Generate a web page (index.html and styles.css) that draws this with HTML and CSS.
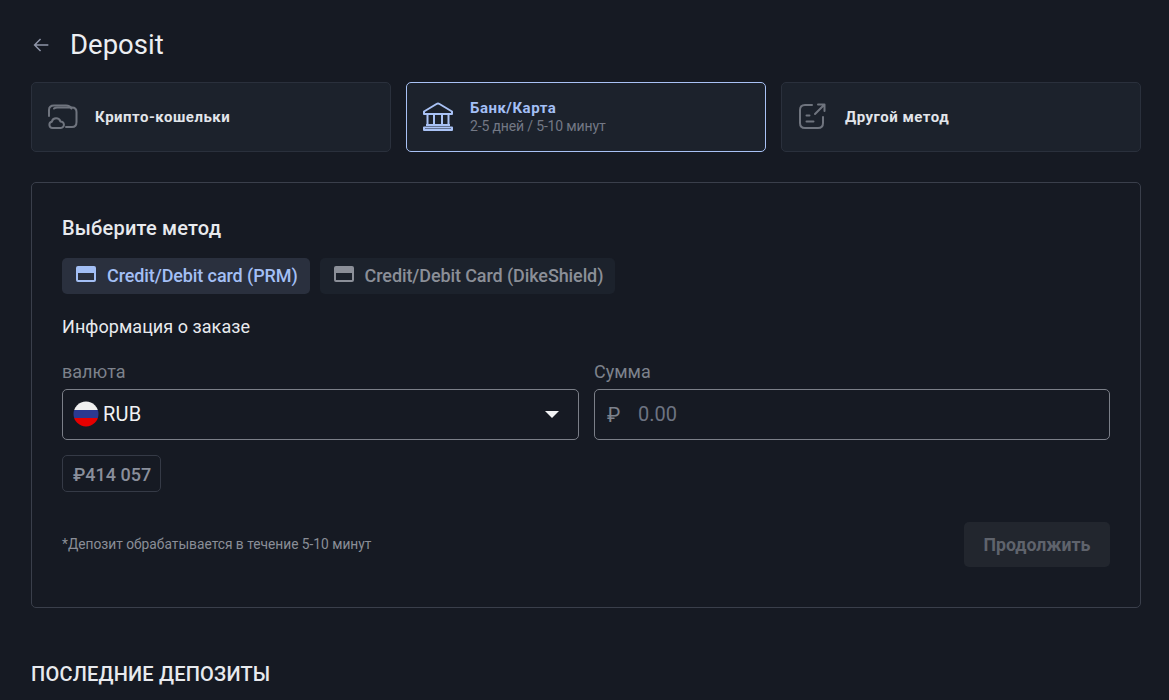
FILE: index.html
```html
<!DOCTYPE html>
<html lang="ru">
<head>
<meta charset="utf-8">
<title>Deposit</title>
<link rel="stylesheet" href="styles.css">
</head>
<body>
<main class="page">
  <header class="title-row">
    <svg class="back" viewBox="0 0 24 24" fill="none" stroke="currentColor" stroke-width="1.6"><path d="M20 12H5M11.500 5.500 5 12l6.500 6.500"/></svg>
    <h1>Deposit</h1>
  </header>
  <section class="tabs">
    <div class="tab">
      <svg class="tab-icon" viewBox="0 0 32 32" fill="none" stroke="currentColor" stroke-width="2" stroke-linecap="round" stroke-linejoin="round"><path d="M2 15V9C2 6 4 4.500 7 4.500h12c2.800 0 4.600 1 5.500 3"/><path d="M7 7.500c.8-.7 2-1 3.500-1H25c3 0 4.500 2 4.500 4.500v10c0 3-1.500 5-4.500 5h-6"/><path d="M5.500 27a3.200 3.200 0 0 1-.7-6.300 4.500 4.500 0 0 1 8.600-.3 3.300 3.300 0 0 1 .4 6.600z"/></svg>
      <div class="tab-text"><div class="tab-title">Крипто-кошельки</div></div>
    </div>
    <div class="tab active">
      <svg class="tab-icon" viewBox="0 0 32 32" fill="none" stroke="currentColor" stroke-width="2" stroke-linejoin="round"><path d="M14.500 3a3 3 0 0 1 3 0L30 10.500V13H2v-2.500z"/><path d="M5.500 13v11M12 13v11M20 13v11M26.500 13v11M4 24h24"/><path d="M2 29h28v-2.500H2z"/></svg>
      <div class="tab-text"><div class="tab-title">Банк/Карта</div><div class="tab-sub">2-5 дней / 5-10 минут</div></div>
    </div>
    <div class="tab">
      <svg class="tab-icon" viewBox="0 0 32 32" fill="none" stroke="currentColor" stroke-width="2" stroke-linecap="round" stroke-linejoin="round"><path d="M15 4H8C4.800 4 3 6 3 9v13c0 3 1.800 5 5 5h13c3 0 5-2 5-5v-6"/><path d="M18 13 27.500 3.500M21 3.500h6.500V10"/><path d="M9.500 14.500h3M9.500 20.500h7"/></svg>
      <div class="tab-text"><div class="tab-title">Другой метод</div></div>
    </div>
  </section>
  <section class="panel">
    <h2 class="panel-title">Выберите метод</h2>
    <div class="methods">
      <div class="method selected">
        <svg class="card-icon" viewBox="0 0 20 16"><path fill="currentColor" fill-rule="evenodd" d="M2 0h16a2 2 0 0 1 2 2v12a2 2 0 0 1-2 2H2a2 2 0 0 1-2-2V2a2 2 0 0 1 2-2zm0 7v7h16V7z"/></svg>
        <span class="method-label">Credit/Debit card (PRM)</span>
      </div>
      <div class="method">
        <svg class="card-icon" viewBox="0 0 20 16"><path fill="currentColor" fill-rule="evenodd" d="M2 0h16a2 2 0 0 1 2 2v12a2 2 0 0 1-2 2H2a2 2 0 0 1-2-2V2a2 2 0 0 1 2-2zm0 7v7h16V7z"/></svg>
        <span class="method-label">Credit/Debit Card (DikeShield)</span>
      </div>
    </div>
    <h3 class="section-title">Информация о заказе</h3>
    <div class="form-grid">
      <div class="field">
        <label class="field-label">валюта</label>
        <div class="control select">
          <svg class="flag" viewBox="0 0 26 26"><defs><clipPath id="flag-circle"><circle cx="13" cy="13" r="12.500"/></clipPath></defs><g clip-path="url(#flag-circle)"><rect width="26" height="9" fill="#f0f0f0"/><rect y="9" width="26" height="8" fill="#2b3990"/><rect y="17" width="26" height="9" fill="#e60000"/></g></svg>
          <span class="code">RUB</span>
          <span class="caret"></span>
        </div>
      </div>
      <div class="field">
        <label class="field-label">Сумма</label>
        <div class="control amount">
          <span class="symbol">₽</span>
          <span class="placeholder">0.00</span>
        </div>
      </div>
    </div>
    <div class="limit">₽414 057</div>
    <div class="footer-row">
      <p class="note">*Депозит обрабатывается в течение 5-10 минут</p>
      <button class="submit" type="button">Продолжить</button>
    </div>
  </section>
  <h2 class="recent">Последние депозиты</h2>
</main>
</body>
</html>
```
FILE: styles.css
```css
* { box-sizing: border-box; }
html, body { margin: 0; height: 100%; overflow: hidden; }
body { background: #161a23; font-family: Roboto, "Liberation Sans", sans-serif; color: #e8eaee; }
h1, h2, h3, p { margin: 0; }
.page { padding: 0 28px 0 31px; }
.title-row { height: 82px; padding-top: 27px; display: flex; align-items: flex-start; }
.back { width: 22px; height: 22px; margin: 7px 18px 0 -1px; color: #8f95a8; flex: none; }
h1 { font-size: 27.5px; font-weight: 400; line-height: 36px; color: #eceef2; }
.tabs { display: grid; grid-template-columns: repeat(3, 1fr); gap: 15px; }
.tab { height: 70px; display: flex; align-items: center; gap: 16px; padding: 0 15px; background: #1c222c; border: 1px solid #2a303c; border-radius: 5px; color: #6f747e; }
.tab-icon { width: 32px; height: 32px; flex: none; }
.tab-title { font-size: 15px; font-weight: 700; line-height: 18px; letter-spacing: .5px; color: #e2e5ea; }
.tab-sub { font-size: 14px; line-height: 18px; letter-spacing: -.15px; color: #737885; }
.tab.active { border-color: #a9c2f5; color: #a9c2f5; }
.tab.active .tab-title { color: #a3bff5; }
.panel { margin-top: 30px; height: 426px; padding: 33px 30px 0; border: 1px solid #3a3f4b; border-radius: 5px; }
.panel-title { font-size: 20px; font-weight: 500; line-height: 24px; letter-spacing: .2px; color: #e8eaee; }
.methods { display: flex; gap: 10px; margin-top: 18px; }
.method { height: 36px; display: flex; align-items: center; gap: 11px; padding: 0 12px 0 14px; border-radius: 5px; background: #1c222c; color: #8b8f98; font-size: 18px; font-weight: 500; letter-spacing: -.1px; }
.method-label { margin-top: -2px; }
.method .card-icon { color: #8b8f98; margin-top: -4px; }
.method.selected { background: #2a303e; color: #a3bff5; }
.method.selected .card-icon { color: #a3bff5; }
.card-icon { width: 20px; height: 16px; flex: none; }
.section-title { margin-top: 22px; font-size: 18px; font-weight: 400; line-height: 22px; letter-spacing: .05px; color: #e8eaee; }
.form-grid { display: grid; grid-template-columns: 517px 516px; gap: 15px; margin-top: 23px; }
.field-label { display: block; font-size: 18px; line-height: 22px; color: #7d828c; }
.control { height: 51px; margin-top: 6px; display: flex; align-items: center; border: 1px solid #7b7f88; border-radius: 5px; }
.select { padding: 0 19px 0 10px; }
.flag { width: 26px; height: 26px; flex: none; margin-top: -2px; }
.code { margin: -2px 0 0 4px; font-size: 20px; letter-spacing: .2px; color: #f1f2f4; flex: 1; }
.caret { width: 0; height: 0; border-left: 7px solid transparent; border-right: 7px solid transparent; border-top: 7px solid #f1f2f4; }
.amount { padding: 0 12px; font-size: 20px; }
.symbol { width: 31px; color: #7d828c; }
.placeholder { color: #6d7381; margin-top: -1px; }
.limit { display: inline-flex; align-items: center; height: 37px; margin-top: 15px; padding: 2px 9px 0 10px; border: 1px solid #353a46; border-radius: 5px; font-size: 18px; font-weight: 500; color: #8a8f9b; }
.footer-row { display: flex; justify-content: space-between; align-items: center; margin-top: 30px; }
.note { font-size: 13.75px; color: #8a8e97; margin-top: -1px; }
.submit { width: 146px; height: 45px; border: 0; border-radius: 5px; background: #22262e; color: #5f636c; font: 700 17.7px Roboto, "Liberation Sans", sans-serif; }
.recent { margin-top: 54px; font-size: 20px; font-weight: 500; line-height: 24px; letter-spacing: .2px; text-transform: uppercase; color: #e8eaee; }
```
